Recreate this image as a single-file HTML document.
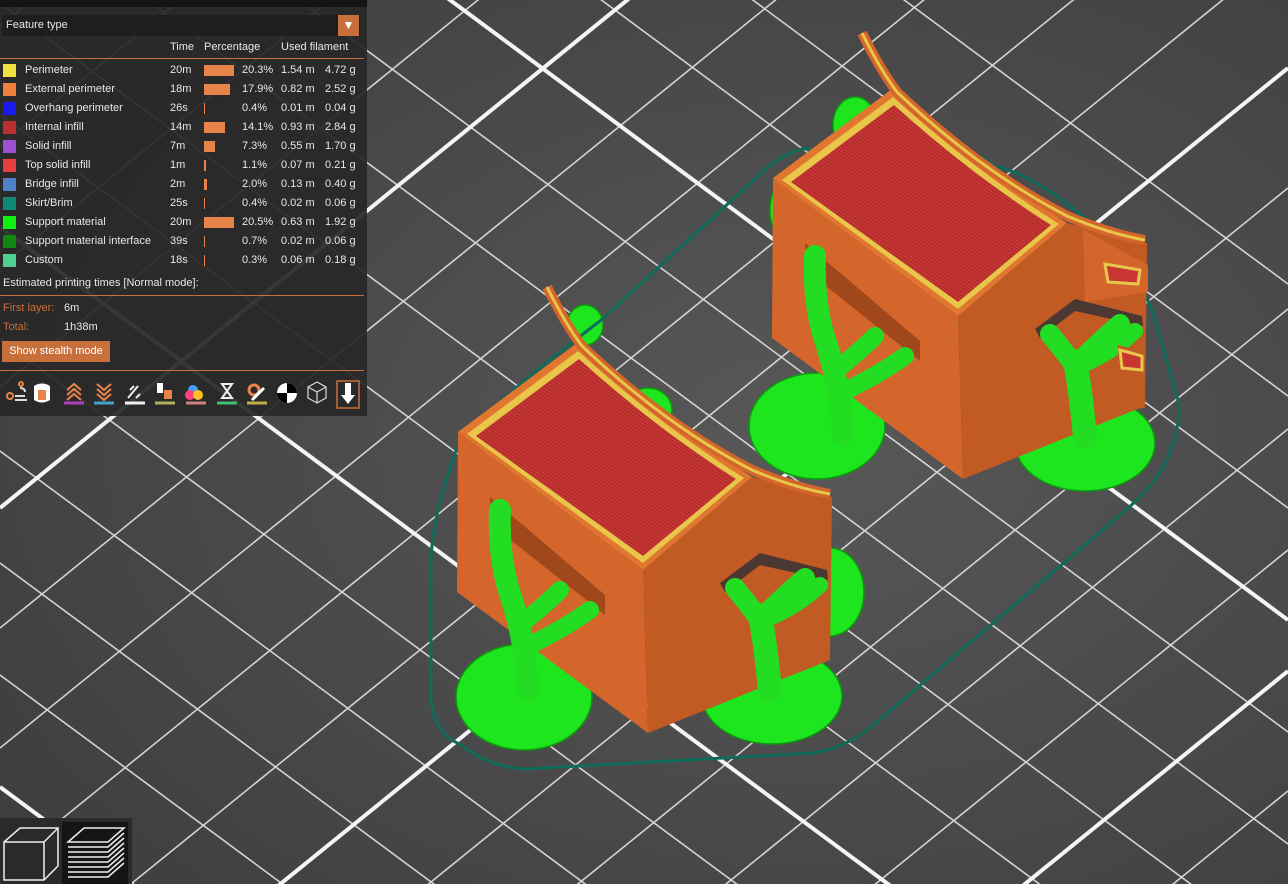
<!DOCTYPE html>
<html><head><style>
html,body{margin:0;width:1288px;height:884px;overflow:hidden}
body{background:#484848;font-family:"Liberation Sans",sans-serif;position:relative}
svg.bg{position:absolute;left:0;top:0}
.panel{position:absolute;left:0;top:0;width:367px;height:416px;background:rgba(40,40,40,0.93);color:#e8e8e8;font-size:11px}
.row{position:absolute;left:0;height:19px;line-height:19px;width:367px}
.sw{position:absolute;left:3px;top:3px;width:13px;height:13px}
.nm{position:absolute;left:25px}
.t{position:absolute;left:170px}
.bar{position:absolute;left:204px;top:4px;height:11px;background:#e8844a}
.p{position:absolute;left:242px}
.m{position:absolute;left:281px}
.g{position:absolute;left:325px}
.hr{position:absolute;left:0;width:364px;height:1px;background:#c8703c}
</style></head><body>
<svg class="bg" width="1288" height="884">
<defs>
<radialGradient id="rg" cx="0.62" cy="0.5" r="0.75"><stop offset="0" stop-color="#585858"/><stop offset="1" stop-color="#3e3e3e"/></radialGradient>
<pattern id="stripe" width="6" height="3" patternUnits="userSpaceOnUse" patternTransform="rotate(33)"><rect width="6" height="3" fill="#c83634"/><rect width="6" height="1" fill="#a82a2a"/></pattern>
<g id="house">
<polygon points="458,432 643,570 648,733 457,592" fill="#d4662b"/>
<polygon points="643,570 752,477 832,497 830,660 648,733" fill="#c25a24"/>
<path d="M458,432 L577,343 Q662,420 752,477 L643,570 Z" fill="#e0762f"/>
<path d="M467,434 L578,351 Q660,425 744,478 L643,563 Z" fill="#e8c64a"/>
<path d="M476,436 L579,359 Q658,430 736,479 L643,556 Z" fill="url(#stripe)"/>
<path d="M547,287 Q566,325 582,346 Q665,425 752,470 Q795,488 830,494" fill="none" stroke="#d4662b" stroke-width="10" stroke-linejoin="round"/>
<path d="M547,287 Q566,325 582,346 Q665,425 752,470 Q795,488 830,494" fill="none" stroke="#e8c64a" stroke-width="3"/>
<polygon points="490,497 605,595 605,615 492,525" fill="#a0481c"/>
<polygon points="720,583 760,553 827,570 828,580 760,565 725,592" fill="#1a2a3a" opacity="0.7"/>
<g stroke="#22dd22" stroke-linecap="round" fill="none">
<path d="M528,690 Q525,640 512,600 Q498,560 500,510" stroke-width="22"/>
<path d="M520,625 Q545,605 560,590" stroke-width="18"/>
<path d="M530,645 Q565,628 590,610" stroke-width="18"/>
<path d="M770,690 Q765,640 760,615" stroke-width="24"/>
<path d="M760,620 Q745,600 735,588" stroke-width="20"/>
<path d="M762,618 Q785,595 805,578" stroke-width="20"/>
<path d="M765,620 Q800,605 820,585" stroke-width="16"/>
</g>
</g>
</defs>
<rect width="1288" height="884" fill="url(#rg)"/>
<g stroke="#d4d4d4" stroke-width="1.6">
<line x1="0" y1="26" x2="1288" y2="-1017"/>
<line x1="0" y1="146" x2="1288" y2="-897"/>
<line x1="0" y1="267" x2="1288" y2="-776"/>
<line x1="0" y1="387" x2="1288" y2="-656"/>
<line x1="0" y1="628" x2="1288" y2="-415"/>
<line x1="0" y1="748" x2="1288" y2="-295"/>
<line x1="0" y1="869" x2="1288" y2="-174"/>
<line x1="0" y1="990" x2="1288" y2="-53"/>
<line x1="0" y1="1231" x2="1288" y2="188"/>
<line x1="0" y1="1352" x2="1288" y2="309"/>
<line x1="0" y1="1472" x2="1288" y2="429"/>
<line x1="0" y1="1593" x2="1288" y2="550"/>
<line x1="0" y1="1834" x2="1288" y2="791"/>
<line x1="0" y1="1955" x2="1288" y2="912"/>
<line x1="0" y1="-669" x2="1288" y2="284"/>
<line x1="0" y1="-557" x2="1288" y2="396"/>
<line x1="0" y1="-445" x2="1288" y2="508"/>
<line x1="0" y1="-221" x2="1288" y2="732"/>
<line x1="0" y1="-109" x2="1288" y2="844"/>
<line x1="0" y1="3" x2="1288" y2="956"/>
<line x1="0" y1="115" x2="1288" y2="1068"/>
<line x1="0" y1="339" x2="1288" y2="1292"/>
<line x1="0" y1="451" x2="1288" y2="1404"/>
<line x1="0" y1="563" x2="1288" y2="1516"/>
<line x1="0" y1="675" x2="1288" y2="1628"/>
<line x1="0" y1="899" x2="1288" y2="1852"/>
</g>
<g stroke="#f4f4f4" stroke-width="4">
<line x1="0" y1="508" x2="1288" y2="-535"/>
<line x1="0" y1="1111" x2="1288" y2="68"/>
<line x1="0" y1="1714" x2="1288" y2="671"/>
<line x1="0" y1="-333" x2="1288" y2="620"/>
<line x1="0" y1="227" x2="1288" y2="1180"/>
<line x1="0" y1="787" x2="1288" y2="1740"/>
</g>
<g fill="#1ee61e" stroke="#0c9a0c" stroke-width="1.5">
<ellipse cx="830" cy="592" rx="34" ry="44"/>
<ellipse cx="855" cy="125" rx="22" ry="28"/>
<ellipse cx="800" cy="210" rx="30" ry="38"/>
<ellipse cx="585" cy="325" rx="18" ry="20"/>
<ellipse cx="648" cy="410" rx="24" ry="22"/>
</g>
<path d="M456,451 Q431,520 431,564 L431,699 Q435,735 460,744 Q490,768 526,769 L813,753 Q845,748 871,727 L1126,510 Q1165,475 1170,451 Q1182,420 1178,400 L1154,316 Q1140,275 1110,240 Q1040,175 994,166 Q975,150 953,149 L801,149 Q775,158 756,178 L600,321 Q470,420 456,451Z" fill="none" stroke="#0f6b5a" stroke-width="3"/>
<g fill="#1ee61e" stroke="#0c9a0c" stroke-width="1.5">
<ellipse cx="524" cy="697" rx="68" ry="53"/><ellipse cx="772" cy="696" rx="70" ry="48"/>
<ellipse cx="817" cy="426" rx="68" ry="53"/><ellipse cx="1085" cy="443" rx="70" ry="48"/>
</g>
<g transform="translate(315,-254)">
<use href="#house"/>
</g>
<polygon points="1083,230 1148,265 1148,292 1085,302" fill="#d4662b"/>
<polygon points="1105,264 1140,270 1138,284 1108,282" fill="#c83634" stroke="#e8c64a" stroke-width="3"/>
<polygon points="1118,345 1145,352 1145,408 1120,410" fill="#c25a24"/>
<polygon points="1120,350 1142,356 1142,370 1122,368" fill="#c83634" stroke="#e8c64a" stroke-width="3"/>
<use href="#house"/>
<rect x="0" y="818" width="132" height="66" fill="#2a2a2a"/>
<rect x="62" y="822" width="66" height="62" fill="#141414"/>
<g fill="none" stroke="#eee" stroke-width="1.5"><path d="M4 842 L20 828 L58 828 L58 866 L44 880 L4 880Z M4 842 L44 842 L44 880 M44 842 L58 828"/>
<path d="M68 842 L84 828 L124 828 L108 842Z M68 847 H108 L124 833 M68 852 H108 L124 838 M68 857 H108 L124 843 M68 862 H108 L124 848 M68 867 H108 L124 853 M68 872 H108 L124 858 M68 877 H108 L124 863"/></g>
</svg>
<div class="panel">
<div style="position:absolute;left:0;top:0;width:367px;height:7px;background:#141414"></div>
<div style="position:absolute;left:2px;top:15px;width:358px;height:21px;background:#1e1e1e"></div>
<div style="position:absolute;left:6px;top:15px;line-height:21px">Feature type</div>
<div style="position:absolute;left:338px;top:15px;width:21px;height:21px;background:#c8703c;color:#fff;text-align:center;line-height:21px;font-size:12px">▼</div>
<div class="row" style="top:38px"><span class="t">Time</span><span style="position:absolute;left:204px">Percentage</span><span style="position:absolute;left:281px">Used filament</span></div>
<div class="hr" style="top:58px"></div>
<div class="row" style="top:61px"><i class="sw" style="background:#f0e040"></i><span class="nm">Perimeter</span><span class="t">20m</span><b class="bar" style="width:30px"></b><span class="p">20.3%</span><span class="m">1.54 m</span><span class="g">4.72 g</span></div>
<div class="row" style="top:80px"><i class="sw" style="background:#f08040"></i><span class="nm">External perimeter</span><span class="t">18m</span><b class="bar" style="width:26px"></b><span class="p">17.9%</span><span class="m">0.82 m</span><span class="g">2.52 g</span></div>
<div class="row" style="top:99px"><i class="sw" style="background:#1a1aee"></i><span class="nm">Overhang perimeter</span><span class="t">26s</span><b class="bar" style="width:1px"></b><span class="p">0.4%</span><span class="m">0.01 m</span><span class="g">0.04 g</span></div>
<div class="row" style="top:118px"><i class="sw" style="background:#b83030"></i><span class="nm">Internal infill</span><span class="t">14m</span><b class="bar" style="width:21px"></b><span class="p">14.1%</span><span class="m">0.93 m</span><span class="g">2.84 g</span></div>
<div class="row" style="top:137px"><i class="sw" style="background:#9a50d0"></i><span class="nm">Solid infill</span><span class="t">7m</span><b class="bar" style="width:11px"></b><span class="p">7.3%</span><span class="m">0.55 m</span><span class="g">1.70 g</span></div>
<div class="row" style="top:156px"><i class="sw" style="background:#e84040"></i><span class="nm">Top solid infill</span><span class="t">1m</span><b class="bar" style="width:2px"></b><span class="p">1.1%</span><span class="m">0.07 m</span><span class="g">0.21 g</span></div>
<div class="row" style="top:175px"><i class="sw" style="background:#5080c8"></i><span class="nm">Bridge infill</span><span class="t">2m</span><b class="bar" style="width:3px"></b><span class="p">2.0%</span><span class="m">0.13 m</span><span class="g">0.40 g</span></div>
<div class="row" style="top:194px"><i class="sw" style="background:#108878"></i><span class="nm">Skirt/Brim</span><span class="t">25s</span><b class="bar" style="width:1px"></b><span class="p">0.4%</span><span class="m">0.02 m</span><span class="g">0.06 g</span></div>
<div class="row" style="top:213px"><i class="sw" style="background:#10f010"></i><span class="nm">Support material</span><span class="t">20m</span><b class="bar" style="width:30px"></b><span class="p">20.5%</span><span class="m">0.63 m</span><span class="g">1.92 g</span></div>
<div class="row" style="top:232px"><i class="sw" style="background:#108810"></i><span class="nm">Support material interface</span><span class="t">39s</span><b class="bar" style="width:1px"></b><span class="p">0.7%</span><span class="m">0.02 m</span><span class="g">0.06 g</span></div>
<div class="row" style="top:251px"><i class="sw" style="background:#50d090"></i><span class="nm">Custom</span><span class="t">18s</span><b class="bar" style="width:1px"></b><span class="p">0.3%</span><span class="m">0.06 m</span><span class="g">0.18 g</span></div>
<div class="row" style="top:274px"><span style="position:absolute;left:3px">Estimated printing times [Normal mode]:</span></div>
<div class="hr" style="top:295px"></div>
<div class="row" style="top:299px"><span style="position:absolute;left:3px;color:#c8703c">First layer:</span><span style="position:absolute;left:64px">6m</span></div>
<div class="row" style="top:318px"><span style="position:absolute;left:3px;color:#c8703c">Total:</span><span style="position:absolute;left:64px">1h38m</span></div>
<div style="position:absolute;left:2px;top:341px;width:108px;height:21px;background:#c8703c;color:#fff;line-height:21px;text-align:center">Show stealth mode</div>
<div class="hr" style="top:370px"></div>
<svg style="position:absolute;left:0;top:378px" width="367" height="34">
<g fill="none" stroke-width="2">
<circle cx="10" cy="18" r="3" stroke="#e8844a"/><path d="M15 22 h12 M15 18 h10 M20 10 q5 0 5 4" stroke="#ddd"/><circle cx="21" cy="6" r="2" stroke="#e8844a"/>
<path d="M34 8 q8-5 16 0 v14 q-8 5 -16 0z" fill="#fff" stroke="none"/><path d="M38 12 v10 h8 v-10" fill="#e8844a" stroke="none"/>
<path d="M67 12 l7-6 7 6 M67 17 l7-6 7 6 M67 22 l7-6 7 6" stroke="#e8844a"/><path d="M64 25 h20" stroke="#b040c0" stroke-width="3"/>
<path d="M97 6 l7 6 7-6 M97 11 l7 6 7-6 M97 16 l7 6 7-6" stroke="#e8844a"/><path d="M94 25 h20" stroke="#40a0d0" stroke-width="3"/>
<path d="M128 20 l10-12 M130 12 l4-4 M136 20 l4-4" stroke="#eee"/><path d="M125 25 h20" stroke="#eee" stroke-width="3"/>
<rect x="157" y="5" width="6" height="10" fill="#fff" stroke="none"/><rect x="164" y="12" width="8" height="9" fill="#e8844a" stroke="none"/><path d="M155 25 h20" stroke="#b0b060" stroke-width="3"/>
<circle cx="193" cy="12" r="5" fill="#40a0ff" stroke="none"/><circle cx="190" cy="17" r="5" fill="#ff4080" stroke="none"/><circle cx="198" cy="17" r="5" fill="#ffc020" stroke="none"/><path d="M186 25 h20" stroke="#d08080" stroke-width="3"/>
<path d="M222 6 h10 l-10 14 h10z" stroke="#eee"/><path d="M217 25 h20" stroke="#40c070" stroke-width="3"/>
<circle cx="254" cy="12" r="5" stroke="#e8844a" stroke-width="3"/><path d="M252 22 l12-12" stroke="#fff" stroke-width="3"/><path d="M247 25 h20" stroke="#c0b040" stroke-width="3"/>
<circle cx="287" cy="15" r="10" fill="#fff" stroke="none"/><path d="M287 5 a10 10 0 0 1 10 10 h-10z M287 25 a10 10 0 0 1 -10 -10 h10z" fill="#000" stroke="none"/>
<path d="M317 4 l9 5 v11 l-9 5 -9 -5 v-11z M308 9 l9 5 9-5 M317 14 v11" stroke="#ddd" stroke-width="1.2"/>
<rect x="337" y="3" width="22" height="27" stroke="#c8703c" stroke-width="1.5"/><path d="M345 5 h6 v12 h4 l-7 9 -7-9 h4z" fill="#fff" stroke="none"/>
</g></svg>
</div>
</body></html>
